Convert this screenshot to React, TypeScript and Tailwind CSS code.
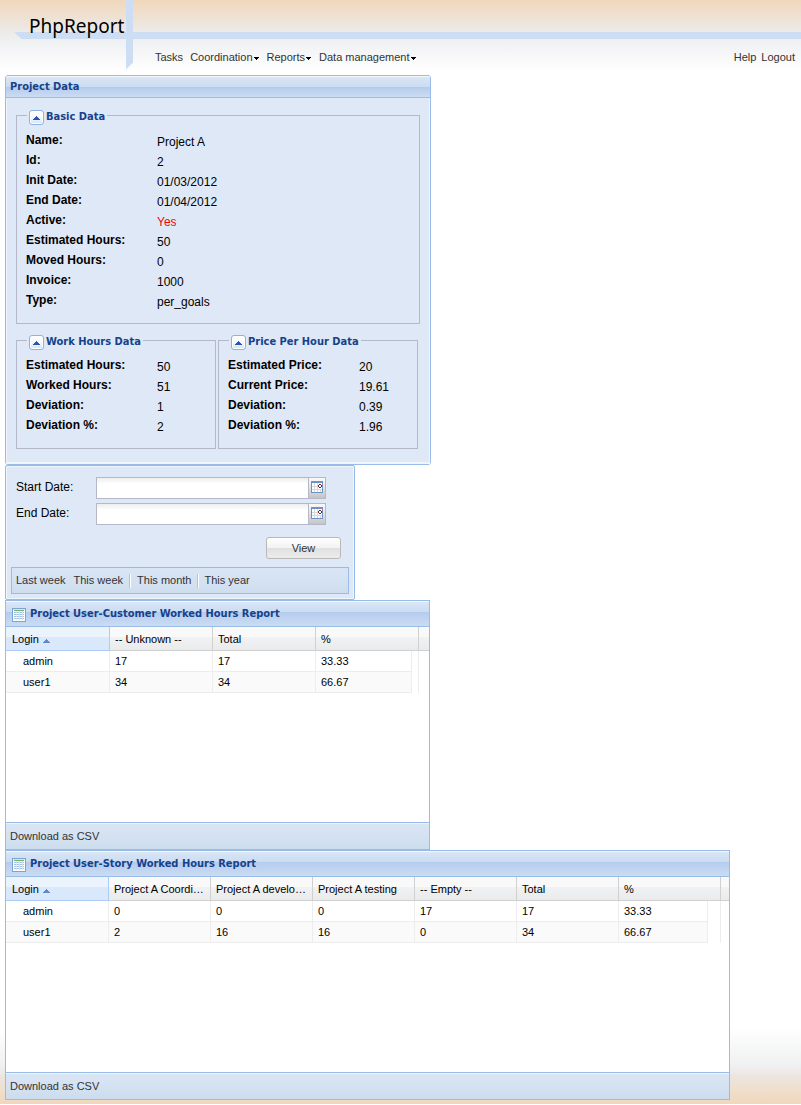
import type { ReactNode } from "react";

const titleFont = "font-['DejaVu_Sans_Condensed','DejaVu_Sans',sans-serif] text-[11px] font-bold text-[#15428b]";

const titleBar =
  "border-b border-[#99bbe8] bg-[linear-gradient(#dce8f6_0,#d3e1f3_5px,#cbddf3_11px,#b0c9ea_11px,#b7cdee_12px,#cbdcf3_100%)] shadow-[inset_0_1px_0_#f3f8fd]";

function MenuArrow() {
  return (
    <svg width="5" height="3" viewBox="0 0 5 3" className="mt-[3px]" aria-hidden="true">
      <path d="M0 0h5v1H4v1H3v1H2V2H1V1H0z" fill="#000" />
    </svg>
  );
}

function NavItem({ label, menu = false }: { label: string; menu?: boolean }) {
  return (
    <button type="button" className="flex items-center gap-[1px] whitespace-nowrap leading-[14px]">
      {label}
      {menu && <MenuArrow />}
    </button>
  );
}

function Header() {
  return (
    <header className="relative h-[75px]">
      <div className="absolute left-[22px] right-0 top-8 h-[7px] bg-[#cdddf3]" />
      <svg width="133" height="70" viewBox="0 0 133 70" className="absolute left-0 top-0" aria-hidden="true">
        <path d="M14 32H30V39H21.500z" fill="#cdddf3" />
        <path d="M126 0H133V62.500L126 69.500z" fill="#cdddf3" />
      </svg>
      <h1 className="absolute left-[29px] top-[13px] font-['Noto_Sans',sans-serif] text-[19px] leading-[26px] text-black">PhpReport</h1>
      <nav className="flex justify-between pl-[155px] pr-[6px] pt-[50px] text-[#333]">
        <div className="flex gap-[7px]">
          <NavItem label="Tasks" />
          <div className="flex gap-2">
            <NavItem label="Coordination" menu />
            <NavItem label="Reports" menu />
            <NavItem label="Data management" menu />
          </div>
        </div>
        <div className="flex gap-[5px]">
          <a href="#help" className="leading-[14px]">Help</a>
          <a href="#logout" className="leading-[14px]">Logout</a>
        </div>
      </nav>
    </header>
  );
}

type Field = { label: string; value: string; alert?: boolean };

function FieldGroup({ title, fields, className = "" }: { title: string; fields: Field[]; className?: string }) {
  return (
    <fieldset className={`border border-[#b5b8c8] pb-3 pl-[9px] ${className}`}>
      <legend className="ml-[1px] flex h-[11px] items-center gap-[2px] px-[2px] pt-[4px]">
        <button
          type="button"
          aria-label={`Collapse ${title}`}
          className="flex size-[15px] shrink-0 items-center justify-center rounded-[3px] border border-[#8db2e3] bg-[linear-gradient(#fff,#f4f9ff_50%,#cfe2f8)] shadow-[inset_0_0_0_1px_#fff]"
        >
          <svg width="7" height="4" viewBox="0 0 7 4" aria-hidden="true">
            <path d="M3 0h1v1h1v1h1v1h1v1H0V3h1V2h1V1h1z" fill="#2a55b0" />
          </svg>
        </button>
        <span className={`whitespace-nowrap pb-[2px] leading-[11px] ${titleFont}`}>{title}</span>
      </legend>
      <dl className="pt-[10px] text-[12px] text-black">
        {fields.map((f) => (
          <div key={f.label} className="flex h-5">
            <dt className="w-[131px] font-bold leading-[18px]">{f.label}</dt>
            <dd className={`leading-[22px] ${f.alert ? "text-[#f00]" : ""}`}>{f.value}</dd>
          </div>
        ))}
      </dl>
    </fieldset>
  );
}

const basicData: Field[] = [
  { label: "Name:", value: "Project A" },
  { label: "Id:", value: "2" },
  { label: "Init Date:", value: "01/03/2012" },
  { label: "End Date:", value: "01/04/2012" },
  { label: "Active:", value: "Yes", alert: true },
  { label: "Estimated Hours:", value: "50" },
  { label: "Moved Hours:", value: "0" },
  { label: "Invoice:", value: "1000" },
  { label: "Type:", value: "per_goals" },
];

const workHours: Field[] = [
  { label: "Estimated Hours:", value: "50" },
  { label: "Worked Hours:", value: "51" },
  { label: "Deviation:", value: "1" },
  { label: "Deviation %:", value: "2" },
];

const priceData: Field[] = [
  { label: "Estimated Price:", value: "20" },
  { label: "Current Price:", value: "19.61" },
  { label: "Deviation:", value: "0.39" },
  { label: "Deviation %:", value: "1.96" },
];

function ProjectPanel() {
  return (
    <section className="w-[426px] max-w-full rounded-[3px] border border-[#99bbe8] bg-[#dfe8f6]">
      <h2 className={`rounded-t-[2px] px-1 pt-[1px] leading-[20px] ${titleBar} ${titleFont}`}>Project Data</h2>
      <div className="flex flex-col gap-[11px] px-[10px] pb-[15px] pt-3 shadow-[inset_-1px_-2px_0_#f0f5fc,inset_1px_0_0_#f0f5fc]">
        <FieldGroup title="Basic Data" fields={basicData} />
        <div className="flex gap-[2px]">
          <FieldGroup title="Work Hours Data" fields={workHours} className="w-[200px]" />
          <FieldGroup title="Price Per Hour Data" fields={priceData} className="w-[200px]" />
        </div>
      </div>
    </section>
  );
}

function CalendarIcon() {
  return (
    <svg width="12" height="12" viewBox="0 0 12 12" shapeRendering="crispEdges" aria-hidden="true">
      <path d="M0 0h12v12H0z" fill="#6d93c4" />
      <path d="M1 2h10v9H1z" fill="#fff" />
      <path d="M3 2h1v9H3zM6 2h1v9H6zM9 8h1v3H9zM1 5h6v1H1zM1 8h10v1H1z" fill="#d4d8df" />
      <path d="M8 3h2v1h1v2h-1v1H8V6H7V4h1z" fill="#8b1a1a" />
      <path d="M8 4h2v2H8z" fill="#fff" />
    </svg>
  );
}

function DateField({ id, label }: { id: string; label: string }) {
  return (
    <div className="flex h-[22px]">
      <label htmlFor={id} className="w-20 text-[12px] leading-[20px] text-black">{label}</label>
      <input
        id={id}
        type="text"
        className="w-[213px] border border-[#b5b8c8] bg-[linear-gradient(#eceeee,#fff_6px)] px-[3px] text-[12px] outline-none"
      />
      <button
        type="button"
        aria-label={`Pick ${label.replace(":", "")}`}
        className="flex w-[17px] items-start justify-center border-y border-r border-[#b5b8c8] bg-[linear-gradient(#fafafa,#e2e2e2_50%,#c4c4c4)] pt-[3px]"
      >
        <CalendarIcon />
      </button>
    </div>
  );
}

function Separator() {
  return (
    <span className="flex h-[14px]">
      <span className="w-px bg-[#98c8ff]" />
      <span className="w-px bg-white" />
    </span>
  );
}

function DatePanel() {
  return (
    <form
      className="w-[350px] max-w-full rounded-[2px] border border-[#99bbe8] bg-[#dfe8f6] px-[5px] pb-[5px] pt-[11px] shadow-[inset_0_0_0_1px_#f0f5fc]"
      onSubmit={(e) => e.preventDefault()}
    >
      <div className="flex flex-col gap-1 px-[5px]">
        <DateField id="start-date" label="Start Date:" />
        <DateField id="end-date" label="End Date:" />
      </div>
      <div className="flex justify-end px-2 pb-2 pt-3">
        <button
          type="submit"
          className="h-[22px] w-[75px] rounded-[3px] border border-[#b8b8b8] bg-[linear-gradient(#fff,#f2f2f2_50%,#e0e0e0_50%,#ececec)] text-[#333]"
        >
          View
        </button>
      </div>
      <div className="flex h-[27px] items-center border border-[#99bbe8] bg-[linear-gradient(#dae5f4,#cedeef)] pl-1 text-[#333]">
        <button type="button">Last week</button>
        <button type="button" className="ml-2 mr-[6px]">This week</button>
        <Separator />
        <button type="button" className="mx-[6px]">This month</button>
        <Separator />
        <button type="button" className="mx-[5px]">This year</button>
      </div>
    </form>
  );
}

function ReportIcon() {
  return (
    <svg width="14" height="14" viewBox="0 0 14 14" shapeRendering="crispEdges" aria-hidden="true">
      <path d="M0 0h14v14H0z" fill="#7da3d3" />
      <path d="M1 1h12v12H1z" fill="#fff" />
      <path d="M1 1h12v1H1z" fill="#d9ead3" />
      <path d="M2 2h10v1H2z" fill="#72b36b" />
      <path d="M2 4h2v1H2zM5 4h2v1H5zM8 4h2v1H8zM11 4h1v1h-1zM2 6h2v1H2zM5 6h2v1H5zM8 6h2v1H8zM11 6h1v1h-1zM2 8h2v1H2zM5 8h2v1H5zM8 8h2v1H8zM11 8h1v1h-1zM2 10h2v1H2zM5 10h2v1H5zM8 10h2v1H8zM11 10h1v1h-1z" fill="#9fc0e6" />
      <path d="M4 3h1v9H4zM7 3h1v9H7zM10 3h1v9h-1z" fill="#d5e3f4" />
    </svg>
  );
}

type ReportProps = {
  title: string;
  columns: string[];
  rows: string[][];
  cols: ReactNode;
  width: string;
};

function Report({ title, columns, rows, cols, width }: ReportProps) {
  return (
    <section className={`flex h-[250px] max-w-full flex-col border border-[#99bbe8] bg-white ${width}`}>
      <h2 className={`flex h-[26px] items-center gap-1 pl-[6px] ${titleBar} ${titleFont}`}>
        <span className="mt-[3px]">
          <ReportIcon />
        </span>
        <span className="leading-[24px]">{title}</span>
      </h2>
      <div className="grow">
        <table className="w-full table-fixed border-separate border-spacing-0 text-left text-black">
          <colgroup>{cols}</colgroup>
          <thead>
            <tr className="h-6 bg-[linear-gradient(#fff_0,#f9f9f9_1px,#f9f9f9_10px,#f1f2f3_10px,#e9eaec_100%)]">
              {columns.map((c, i) => (
                <th
                  key={c}
                  scope="col"
                  colSpan={i === columns.length - 1 ? 2 : 1}
                  className={`truncate border-b border-r p-0 pr-1 font-normal leading-[22px] ${
                    i === 0
                      ? "border-b-[#aaccf6] border-r-[#aaccf6] bg-[linear-gradient(#ebf3fd_0,#ebf3fd_10px,#dbe8fb_10px,#d9e8fb_100%)] pl-[6px]"
                      : "border-[#d0d0d0] pl-[5px]"
                  }`}
                >
                  {i === 0 ? (
                    <span className="flex items-center gap-1">
                      {c}
                      <svg width="7" height="4" viewBox="0 0 7 4" className="mt-[4px]" aria-hidden="true">
                        <path d="M3 0h1v1h1v1h1v1h1v1H0V3h1V2h1V1h1z" fill="#5c8bc8" />
                      </svg>
                    </span>
                  ) : (
                    c
                  )}
                </th>
              ))}
              <td className="border-b border-[#d0d0d0] p-0" />
            </tr>
          </thead>
          <tbody>
            {rows.map((row, r) => (
              <tr key={row[0]} className="h-[21px]">
                {row.map((v, i) => (
                  <td
                    key={i}
                    className={`truncate border-b border-r border-[#ededed] p-0 leading-[20px] ${i === 0 ? "pl-[17px]" : "pl-[5px]"} ${
                      r % 2 ? "bg-[#fafafa]" : ""
                    }`}
                  >
                    {v}
                  </td>
                ))}
                <td className="border-r border-[#ededed] p-0" />
                <td className="p-0" />
              </tr>
            ))}
          </tbody>
        </table>
      </div>
      <div className="h-[27px] border-t border-[#99bbe8] bg-[linear-gradient(#dbe6f5,#cddded)] px-1 text-[#333] shadow-[inset_0_1px_0_#eef4fb]">
        <button type="button" className="leading-[26px]">Download as CSV</button>
      </div>
    </section>
  );
}

export default function App() {
  return (
    <div className="bg-[linear-gradient(#f1d7bb_0,#ece9e6_30px,#f0f1f3_42px,#fff_72px,#fff_calc(100%-76px),#eff0f1_calc(100%-38px),#ece6e0_calc(100%-28px),#f1d7bb_100%)] pb-1 font-['Liberation_Sans',Arial,sans-serif] text-[11px]">
      <Header />
      <main className="px-[5px]">
        <ProjectPanel />
        <DatePanel />
        <Report
          title="Project User-Customer Worked Hours Report"
          width="w-[425px]"
          columns={["Login", "-- Unknown --", "Total", "%"]}
          rows={[
            ["admin", "17", "17", "33.33"],
            ["user1", "34", "34", "66.67"],
          ]}
          cols={
            <>
              <col className="w-[104px]" />
              <col className="w-[103px]" span={2} />
              <col className="w-[96px]" />
              <col className="w-[7px]" />
              <col />
            </>
          }
        />
        <Report
          title="Project User-Story Worked Hours Report"
          width="w-[725px]"
          columns={["Login", "Project A Coordi…", "Project A develo…", "Project A testing", "-- Empty --", "Total", "%"]}
          rows={[
            ["admin", "0", "0", "0", "17", "17", "33.33"],
            ["user1", "2", "16", "16", "0", "34", "66.67"],
          ]}
          cols={
            <>
              <col className="w-[103px]" />
              <col className="w-[102px]" span={5} />
              <col className="w-[89px]" />
              <col className="w-[13px]" />
              <col />
            </>
          }
        />
      </main>
    </div>
  );
}
